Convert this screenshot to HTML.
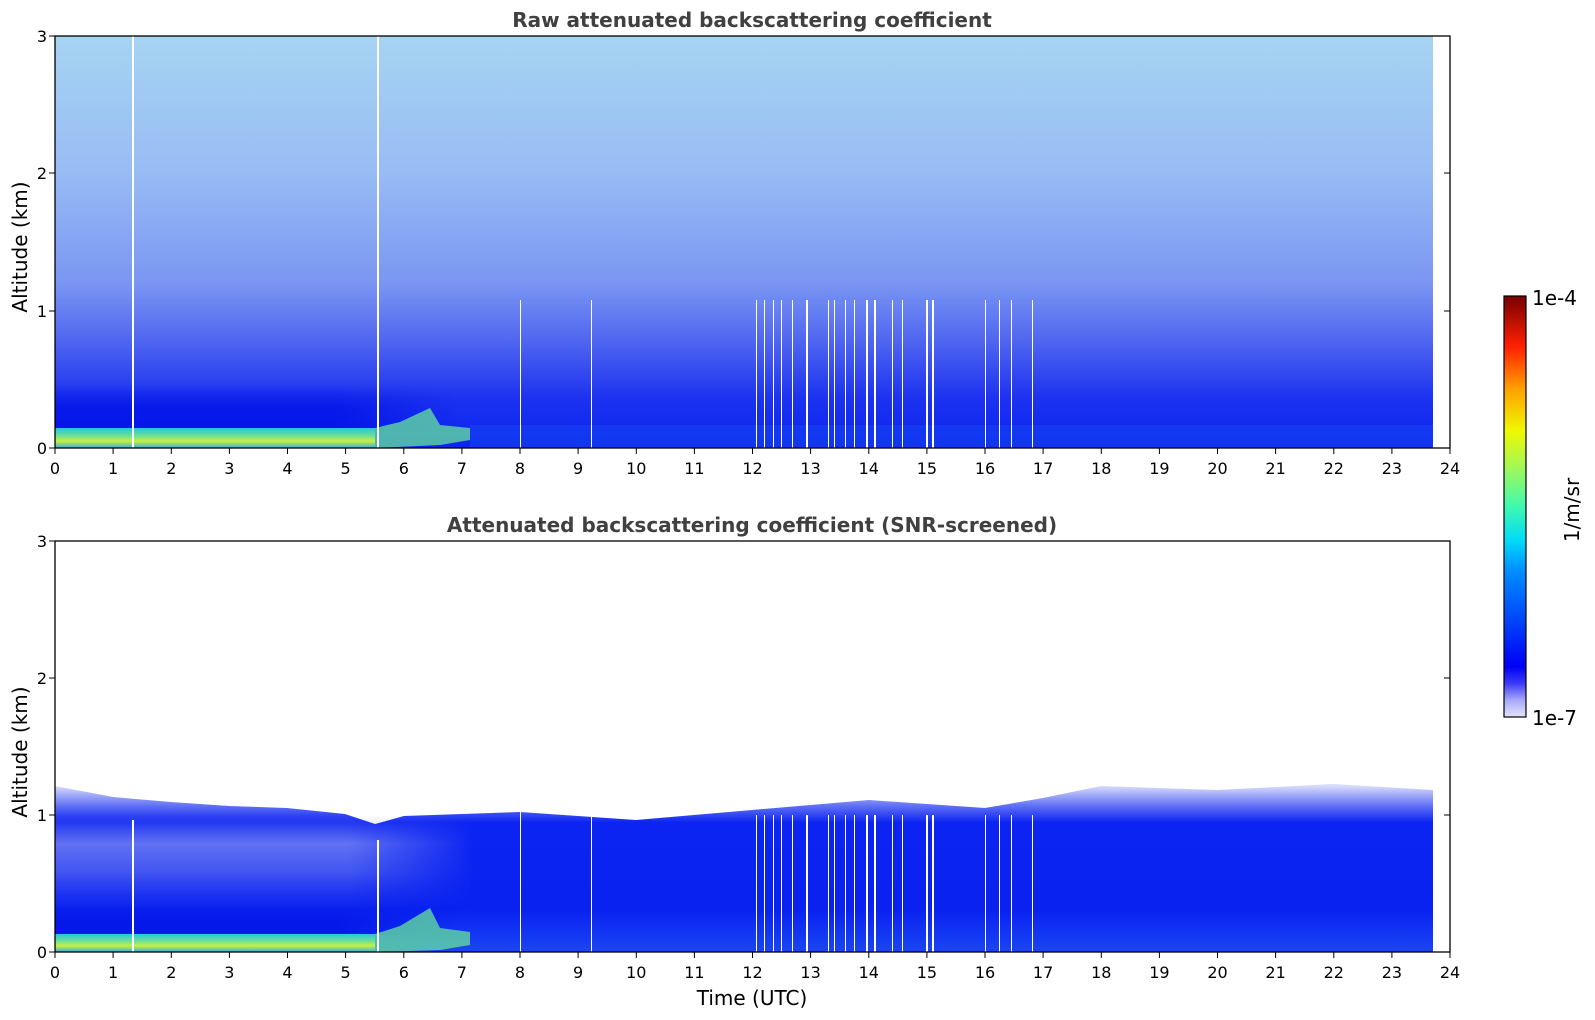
<!DOCTYPE html>
<html><head><meta charset="utf-8"><style>html,body{margin:0;padding:0;background:#fff}svg{display:block}</style></head>
<body>
<svg width="1595" height="1020" viewBox="0 0 1595 1020" xmlns="http://www.w3.org/2000/svg" font-family="DejaVu Sans, Liberation Sans, sans-serif">
<defs>
<linearGradient id="gTop" x1="0" y1="36" x2="0" y2="448" gradientUnits="userSpaceOnUse">
<stop offset="0" stop-color="#a6d4f2"/>
<stop offset="0.33" stop-color="#98bcf4"/>
<stop offset="0.6" stop-color="#7a96f2"/>
<stop offset="0.75" stop-color="#4c62f0"/>
<stop offset="0.88" stop-color="#1c32f0"/>
<stop offset="1" stop-color="#0a24f0"/>
</linearGradient>
<linearGradient id="gYel" x1="0" y1="0" x2="0" y2="1">
<stop offset="0" stop-color="#20c8e0"/>
<stop offset="0.4" stop-color="#70e090"/>
<stop offset="0.65" stop-color="#c8f040"/>
<stop offset="1" stop-color="#30b0e8"/>
</linearGradient>
<linearGradient id="gDark" x1="0" y1="0" x2="0" y2="1">
<stop offset="0" stop-color="#0414e8" stop-opacity="0"/>
<stop offset="0.5" stop-color="#0414e8" stop-opacity="0.8"/>
<stop offset="1" stop-color="#0414e8" stop-opacity="0.9"/>
</linearGradient>
<linearGradient id="gBot" x1="0" y1="786" x2="0" y2="952" gradientUnits="userSpaceOnUse">
<stop offset="0" stop-color="#d8dcfc"/>
<stop offset="0.12" stop-color="#6070f4"/>
<stop offset="0.22" stop-color="#0c24f2"/>
<stop offset="0.75" stop-color="#0a22f0"/>
<stop offset="1" stop-color="#1a46f4"/>
</linearGradient>
<linearGradient id="gLightV" x1="0" y1="0" x2="0" y2="1">
<stop offset="0" stop-color="#8894f2" stop-opacity="0"/>
<stop offset="0.3" stop-color="#8894f2" stop-opacity="0.7"/>
<stop offset="0.6" stop-color="#7080f2" stop-opacity="0.55"/>
<stop offset="1" stop-color="#5060f0" stop-opacity="0"/>
</linearGradient>
<linearGradient id="gFadeH" x1="0" y1="0" x2="1" y2="0">
<stop offset="0" stop-color="#fff"/>
<stop offset="0.7" stop-color="#fff"/>
<stop offset="1" stop-color="#000"/>
</linearGradient>
<mask id="mFade" maskContentUnits="objectBoundingBox"><rect x="0" y="0" width="1" height="1" fill="url(#gFadeH)"/></mask>
<linearGradient id="gCb" x1="0" y1="717" x2="0" y2="296" gradientUnits="userSpaceOnUse">
<stop offset="0" stop-color="#e4e4fa"/>
<stop offset="0.04" stop-color="#a8a8fa"/>
<stop offset="0.08" stop-color="#3a3af8"/>
<stop offset="0.12" stop-color="#0000f4"/>
<stop offset="0.35" stop-color="#0090ff"/>
<stop offset="0.42" stop-color="#00dcf8"/>
<stop offset="0.5" stop-color="#40f8b0"/>
<stop offset="0.6" stop-color="#a8f850"/>
<stop offset="0.68" stop-color="#f0f800"/>
<stop offset="0.78" stop-color="#ffa000"/>
<stop offset="0.88" stop-color="#ff2000"/>
<stop offset="1" stop-color="#780000"/>
</linearGradient>
</defs>

<!-- TOP PLOT -->
<rect x="55" y="36" width="1378" height="412" fill="url(#gTop)"/>
<rect x="55" y="385" width="400" height="45" fill="url(#gDark)" mask="url(#mFade)"/>
<rect x="55" y="428" width="320" height="20" fill="url(#gYel)"/>
<polygon points="375,428 400,422 430,408 440,425 470,428 470,440 440,445 375,448" fill="#60d8a0" opacity="0.8"/>
<rect x="470" y="425" width="963" height="23" fill="#1848f2" opacity="0.5"/>
<g fill="#fff">
<rect x="132" y="36" width="2" height="412"/>
<rect x="377" y="36" width="2" height="412"/>
<rect x="520" y="300" width="1" height="148"/>
<rect x="591" y="300" width="1" height="148"/>
<rect x="756" y="300" width="1" height="148"/><rect x="764" y="300" width="1" height="148"/><rect x="773" y="300" width="1" height="148"/><rect x="781" y="300" width="1" height="148"/><rect x="792" y="300" width="1" height="148"/><rect x="806" y="300" width="2" height="148"/><rect x="828" y="300" width="1" height="148"/><rect x="834" y="300" width="1" height="148"/><rect x="845" y="300" width="1" height="148"/><rect x="854" y="300" width="1" height="148"/><rect x="866" y="300" width="2" height="148"/><rect x="874" y="300" width="2" height="148"/><rect x="892" y="300" width="1" height="148"/><rect x="902" y="300" width="1" height="148"/><rect x="926" y="300" width="2" height="148"/><rect x="932" y="300" width="2" height="148"/><rect x="985" y="300" width="1" height="148"/><rect x="999" y="300" width="1" height="148"/><rect x="1011" y="300" width="1" height="148"/><rect x="1032" y="300" width="1" height="148"/>
</g>

<!-- BOTTOM PLOT -->
<polygon points="55,786 113,797 171,802 229,806 287,808 345,814 375,824 404,816 462,814 520,812 636,820 752,810 869,800 985,808 1043,798 1101,786 1217,790 1333,784 1433,790 1433,952 55,952" fill="url(#gBot)"/>
<rect x="55" y="815" width="420" height="95" fill="url(#gLightV)" mask="url(#mFade)"/>
<rect x="55" y="905" width="400" height="30" fill="url(#gDark)" mask="url(#mFade)"/>
<rect x="55" y="934" width="320" height="18" fill="url(#gYel)"/>
<polygon points="375,934 400,926 430,908 440,928 470,932 470,945 440,950 375,952" fill="#60d8a0" opacity="0.8"/>
<g fill="#fff">
<rect x="132" y="820" width="2" height="132"/>
<rect x="377" y="840" width="2" height="112"/>
<rect x="520" y="810" width="1" height="142"/>
<rect x="591" y="810" width="1" height="142"/>
<rect x="756" y="815" width="1" height="137"/><rect x="764" y="815" width="1" height="137"/><rect x="773" y="815" width="1" height="137"/><rect x="781" y="815" width="1" height="137"/><rect x="792" y="815" width="1" height="137"/><rect x="806" y="815" width="2" height="137"/><rect x="828" y="815" width="1" height="137"/><rect x="834" y="815" width="1" height="137"/><rect x="845" y="815" width="1" height="137"/><rect x="854" y="815" width="1" height="137"/><rect x="866" y="815" width="2" height="137"/><rect x="874" y="815" width="2" height="137"/><rect x="892" y="815" width="1" height="137"/><rect x="902" y="815" width="1" height="137"/><rect x="926" y="815" width="2" height="137"/><rect x="932" y="815" width="2" height="137"/><rect x="985" y="815" width="1" height="137"/><rect x="999" y="815" width="1" height="137"/><rect x="1011" y="815" width="1" height="137"/><rect x="1032" y="815" width="1" height="137"/>
</g>

<!-- frames -->
<rect x="55" y="36" width="1395" height="412" fill="none" stroke="#000" stroke-width="1.3"/>
<rect x="55" y="541" width="1395" height="411" fill="none" stroke="#000" stroke-width="1.3"/>

<!-- ticks -->
<g stroke="#000" stroke-width="1">
<path d="M55 448v6M113.1 448v6M171.3 448v6M229.4 448v6M287.5 448v6M345.6 448v6M403.8 448v6M461.9 448v6M520 448v6M578.1 448v6M636.3 448v6M694.4 448v6M752.5 448v6M810.6 448v6M868.8 448v6M926.9 448v6M985 448v6M1043.1 448v6M1101.3 448v6M1159.4 448v6M1217.5 448v6M1275.6 448v6M1333.8 448v6M1391.9 448v6M1450 448v6"/>
<path d="M55 952v6M113.1 952v6M171.3 952v6M229.4 952v6M287.5 952v6M345.6 952v6M403.8 952v6M461.9 952v6M520 952v6M578.1 952v6M636.3 952v6M694.4 952v6M752.5 952v6M810.6 952v6M868.8 952v6M926.9 952v6M985 952v6M1043.1 952v6M1101.3 952v6M1159.4 952v6M1217.5 952v6M1275.6 952v6M1333.8 952v6M1391.9 952v6M1450 952v6"/>
<path d="M49 448h6M49 311h6M49 173h6M49 36h6M1450 311h-6M1450 173h-6"/>
<path d="M49 952h6M49 815h6M49 678h6M49 541h6M1450 815h-6M1450 678h-6"/>
</g>

<g font-size="16" fill="#000" text-anchor="middle">
<text x="55" y="474">0</text><text x="113.1" y="474">1</text><text x="171.3" y="474">2</text><text x="229.4" y="474">3</text><text x="287.5" y="474">4</text><text x="345.6" y="474">5</text><text x="403.8" y="474">6</text><text x="461.9" y="474">7</text><text x="520" y="474">8</text><text x="578.1" y="474">9</text><text x="636.3" y="474">10</text><text x="694.4" y="474">11</text><text x="752.5" y="474">12</text><text x="810.6" y="474">13</text><text x="868.8" y="474">14</text><text x="926.9" y="474">15</text><text x="985" y="474">16</text><text x="1043.1" y="474">17</text><text x="1101.3" y="474">18</text><text x="1159.4" y="474">19</text><text x="1217.5" y="474">20</text><text x="1275.6" y="474">21</text><text x="1333.8" y="474">22</text><text x="1391.9" y="474">23</text><text x="1450" y="474">24</text>
<text x="55" y="978">0</text><text x="113.1" y="978">1</text><text x="171.3" y="978">2</text><text x="229.4" y="978">3</text><text x="287.5" y="978">4</text><text x="345.6" y="978">5</text><text x="403.8" y="978">6</text><text x="461.9" y="978">7</text><text x="520" y="978">8</text><text x="578.1" y="978">9</text><text x="636.3" y="978">10</text><text x="694.4" y="978">11</text><text x="752.5" y="978">12</text><text x="810.6" y="978">13</text><text x="868.8" y="978">14</text><text x="926.9" y="978">15</text><text x="985" y="978">16</text><text x="1043.1" y="978">17</text><text x="1101.3" y="978">18</text><text x="1159.4" y="978">19</text><text x="1217.5" y="978">20</text><text x="1275.6" y="978">21</text><text x="1333.8" y="978">22</text><text x="1391.9" y="978">23</text><text x="1450" y="978">24</text>
</g>
<g font-size="16" fill="#000" text-anchor="end">
<text x="47" y="454">0</text><text x="47" y="317">1</text><text x="47" y="179">2</text><text x="47" y="42">3</text>
<text x="47" y="958">0</text><text x="47" y="821">1</text><text x="47" y="684">2</text><text x="47" y="547">3</text>
</g>

<g font-size="20" fill="#000" text-anchor="middle">
<text transform="translate(27,247) rotate(-90)">Altitude (km)</text>
<text transform="translate(27,752) rotate(-90)">Altitude (km)</text>
<text x="752" y="1005">Time (UTC)</text>
<text transform="translate(1579,510) rotate(-90)">1/m/sr</text>
</g>
<g font-size="20" font-weight="bold" fill="#404040" text-anchor="middle">
<text x="752" y="27">Raw attenuated backscattering coefficient</text>
<text x="752" y="532">Attenuated backscattering coefficient (SNR-screened)</text>
</g>

<!-- colorbar -->
<rect x="1504" y="296" width="22" height="421" fill="url(#gCb)" stroke="#000" stroke-width="1.2"/>
<g font-size="20" fill="#000">
<text x="1532" y="305">1e-4</text>
<text x="1532" y="725">1e-7</text>
</g>
</svg>
</body></html>
